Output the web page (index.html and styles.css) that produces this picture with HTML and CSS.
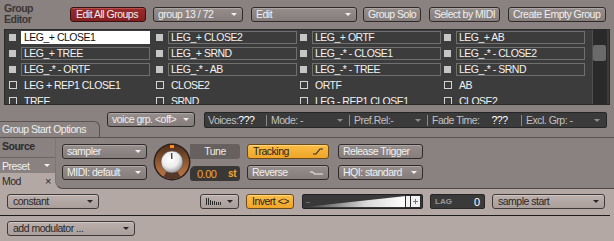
FILE: index.html
```html
<!DOCTYPE html>
<html lang="en">
<head>
    <meta charset="UTF-8">
    <meta name="viewport" content="width=device-width, initial-scale=1.0">
    <title>Group Editor</title>
    <link rel="stylesheet" href="styles.css">
</head>
<body>
    <div class="editor">
        <div class="top-bar">
            <div class="title"><div>Group</div><div>Editor</div></div>
            <button class="btn btn-red btn-edit-all">Edit All Groups</button>
            <button class="btn drop-group"><span>group 13 / 72</span><i class="arrow"></i></button>
            <button class="btn drop-edit"><span>Edit</span><i class="arrow"></i></button>
            <button class="btn btn-solo">Group Solo</button>
            <button class="btn btn-midi">Select by MIDI</button>
            <button class="btn btn-create">Create Empty Group</button>
        </div>

        <div class="group-list">
            <div class="grid">
                <div class="cell"><span class="check"></span><span class="name sel">LEG_+ CLOSE1</span></div>
                <div class="cell"><span class="check"></span><span class="name">LEG_+ CLOSE2</span></div>
                <div class="cell"><span class="check"></span><span class="name">LEG_+ ORTF</span></div>
                <div class="cell"><span class="check"></span><span class="name">LEG_+ AB</span></div>

                <div class="cell"><span class="check"></span><span class="name">LEG_+ TREE</span></div>
                <div class="cell"><span class="check"></span><span class="name">LEG_+ SRND</span></div>
                <div class="cell"><span class="check"></span><span class="name">LEG_-* - CLOSE1</span></div>
                <div class="cell"><span class="check"></span><span class="name">LEG_-* - CLOSE2</span></div>

                <div class="cell"><span class="check"></span><span class="name">LEG_-* - ORTF</span></div>
                <div class="cell"><span class="check"></span><span class="name">LEG_-* - AB</span></div>
                <div class="cell"><span class="check"></span><span class="name">LEG_-* - TREE</span></div>
                <div class="cell"><span class="check"></span><span class="name">LEG_-* - SRND</span></div>

                <div class="cell"><span class="check off"></span><span class="name plain">LEG + REP1 CLOSE1</span></div>
                <div class="cell"><span class="check off"></span><span class="name plain">CLOSE2</span></div>
                <div class="cell"><span class="check off"></span><span class="name plain">ORTF</span></div>
                <div class="cell"><span class="check off"></span><span class="name plain">AB</span></div>

                <div class="cell"><span class="check off"></span><span class="name plain">TREE</span></div>
                <div class="cell"><span class="check off"></span><span class="name plain">SRND</span></div>
                <div class="cell"><span class="check off"></span><span class="name plain">LEG - REP1 CLOSE1</span></div>
                <div class="cell"><span class="check off"></span><span class="name plain">CLOSE2</span></div>
            </div>
            <div class="scrollbar"><div class="thumb"></div></div>
        </div>

        <div class="options-row">
            <div class="tab-start">Group Start Options</div>
            <button class="btn drop-voice"><span>voice grp. &lt;off&gt;</span><i class="arrow"></i></button>
            <div class="info-bar">
                <div class="seg seg-voices">Voices: <b>???</b></div>
                <span class="sep"></span>
                <div class="seg seg-mode">Mode: -<i class="arrow"></i></div>
                <span class="sep"></span>
                <div class="seg seg-pref">Pref.Rel:-<i class="arrow"></i></div>
                <span class="sep"></span>
                <div class="seg seg-fade">Fade Time:<b class="fade-val">???</b></div>
                <span class="sep"></span>
                <div class="seg seg-excl">Excl. Grp: -<i class="arrow"></i></div>
            </div>
        </div>

        <div class="source">
            <div class="source-side">
                <div class="source-label">Source</div>
                <div class="preset-tab"><span>Preset</span><i class="arrow"></i></div>
                <div class="mod-tab"><span>Mod</span><span class="close">&times;</span></div>
            </div>
            <div class="source-panel">
                <div class="col col-drops">
                    <button class="btn"><span>sampler</span><i class="arrow"></i></button>
                    <button class="btn"><span>MIDI: default</span><i class="arrow"></i></button>
                </div>
                <div class="knob">
                    <svg width="38" height="38" viewBox="0 0 38 38">
                        <defs>
                            <radialGradient id="cap" cx="42%" cy="35%" r="70%">
                                <stop offset="0" stop-color="#ffffff"/>
                                <stop offset="0.55" stop-color="#ececec"/>
                                <stop offset="1" stop-color="#8e8e8e"/>
                            </radialGradient>
                            <linearGradient id="ring" x1="0" y1="0" x2="0" y2="1">
                                <stop offset="0" stop-color="#4e2e1c"/>
                                <stop offset="0.7" stop-color="#a8683a"/>
                                <stop offset="1" stop-color="#b47444"/>
                            </linearGradient>
                        </defs>
                        <circle cx="19" cy="19" r="18.5" fill="#2b211c"/>
                        <circle cx="19" cy="19" r="17" fill="url(#ring)"/>
                        <path d="M 10.5 33.7 A 17 17 0 0 0 27.5 33.7 L 19 19 Z" fill="#55382a"/>
                        <rect x="17" y="2" width="4" height="3" fill="#ff8b1f"/>
                        <circle cx="19" cy="19" r="11" fill="url(#cap)" stroke="#4a4644" stroke-width="0.6"/>
                        <line x1="18.6" y1="10" x2="18.8" y2="16" stroke="#4a4a4a" stroke-width="1.5"/>
                    </svg>
                </div>
                <div class="col col-tune">
                    <div class="tune-label">Tune</div>
                    <div class="tune-value"><span>0.00</span><b>st</b></div>
                </div>
                <div class="col col-track">
                    <button class="btn btn-orange">
                        <span>Tracking</span>
                        <svg width="10" height="7" viewBox="0 0 10 7"><polyline points="0,6 3,6 7,1 10,1" fill="none" stroke="#2a2a2a" stroke-width="1.2"/></svg>
                    </button>
                    <button class="btn">
                        <span>Reverse</span>
                        <svg width="13" height="4" viewBox="0 0 13 4"><polyline points="0,1 3,1 4,3 13,3" fill="none" stroke="#f0f0f0" stroke-width="1"/></svg>
                    </button>
                </div>
                <div class="col col-release">
                    <button class="btn">Release Trigger</button>
                    <button class="btn"><span>HQI: standard</span><i class="arrow"></i></button>
                </div>
            </div>
        </div>

        <div class="mod-area">
            <div class="mod-row">
                <button class="btn btn-light drop-constant"><span>constant</span><i class="arrow"></i></button>
                <button class="btn btn-light drop-bars">
                    <svg width="15" height="7" viewBox="0 0 15 7">
                        <rect x="0" y="0" width="1" height="7" fill="#2a2a2a"/>
                        <rect x="2" y="0" width="1" height="7" fill="#2a2a2a"/>
                        <rect x="4" y="2" width="1" height="5" fill="#2a2a2a"/>
                        <rect x="6" y="3" width="1" height="4" fill="#2a2a2a"/>
                        <rect x="8" y="3" width="1" height="4" fill="#2a2a2a"/>
                        <rect x="10" y="4" width="1" height="3" fill="#2a2a2a"/>
                        <rect x="12" y="4" width="1" height="3" fill="#2a2a2a"/>
                        <rect x="14" y="4" width="1" height="3" fill="#2a2a2a"/>
                    </svg>
                    <i class="arrow"></i>
                </button>
                <button class="btn btn-orange btn-invert">Invert &lt;&gt;</button>
                <div class="slider">
                    <svg width="119" height="13" viewBox="0 0 119 13">
                        <defs>
                            <linearGradient id="ramp" x1="0" x2="1" y1="0" y2="0">
                                <stop offset="0" stop-color="#3a3a3a"/>
                                <stop offset="0.6" stop-color="#d8d8d8"/>
                                <stop offset="1" stop-color="#ffffff"/>
                            </linearGradient>
                        </defs>
                        <polygon points="2,12 103,1 103,12" fill="url(#ramp)"/>
                        <rect x="3" y="7" width="4" height="1" fill="#6e6e6e"/>
                        <rect x="102.5" y="0.5" width="15" height="12" fill="#f2f2f2" stroke="#2c2c2c"/>
                        <line x1="107.5" y1="1" x2="107.5" y2="12" stroke="#2c2c2c"/>
                        <line x1="110" y1="6.5" x2="115" y2="6.5" stroke="#777"/>
                        <line x1="112.5" y1="4" x2="112.5" y2="9" stroke="#777"/>
                    </svg>
                </div>
                <div class="lag"><span class="lag-label">LAG</span><span class="lag-value">0</span></div>
                <button class="btn btn-light drop-sample"><span>sample start</span><i class="arrow"></i></button>
            </div>
            <div class="bottom-row">
                <button class="btn btn-light drop-add"><span>add modulator ...</span><i class="arrow"></i></button>
            </div>
        </div>
    </div>
</body>
</html>
```

FILE: styles.css
```css
* {
    margin: 0;
    padding: 0;
    box-sizing: border-box;
}

body {
    font-family: "Liberation Sans", Arial, sans-serif;
    font-size: 10.5px;
    letter-spacing: -0.5px;
    color: #f0f0f0;
    background-color: #8a8280;
    width: 614px;
    height: 241px;
    overflow: hidden;
}

button {
    font: inherit;
    letter-spacing: inherit;
}

.editor {
    display: flex;
    flex-direction: column;
    height: 241px;
}

/* buttons and dropdowns */

.btn {
    height: 15px;
    padding: 0 5px 0 4px;
    border: 1px solid #2f2b2a;
    border-radius: 3px;
    background: linear-gradient(#968e8c, #857d7b);
    box-shadow: inset 0 1px 0 rgba(255, 255, 255, 0.22);
    color: #f0f0f0;
    line-height: 13px;
    text-align: left;
    white-space: nowrap;
    display: flex;
    align-items: center;
    justify-content: space-between;
    cursor: pointer;
    flex: none;
}

.arrow {
    width: 0;
    height: 0;
    border-left: 3px solid transparent;
    border-right: 3px solid transparent;
    border-top: 3px solid #f0f0f0;
    flex: none;
}

.btn-red {
    background: linear-gradient(#9a2c2c, #842022);
    border-color: #3c1010;
    box-shadow: inset 0 1px 0 rgba(255, 160, 160, 0.3);
}

.btn-orange {
    background: linear-gradient(#fbbd45, #eea52a);
    border-color: #6b4a16;
    box-shadow: inset 0 1px 0 rgba(255, 240, 190, 0.5);
    color: #262320;
    padding-left: 5px;
}

.btn-light {
    background: linear-gradient(#bcb0ad, #aa9e9b);
    border-color: #3f3937;
    box-shadow: inset 0 1px 0 rgba(255, 255, 255, 0.3);
    color: #2a2726;
    padding-left: 5px;
}

.btn-light .arrow {
    border-top-color: #2a2726;
}

/* top bar */

.top-bar {
    display: flex;
    align-items: flex-start;
    height: 29px;
    padding: 7px 0 0 4px;
}

.title {
    width: 66px;
    margin-top: -4px;
    font-weight: bold;
    line-height: 10px;
    color: #3b3735;
    flex: none;
}

.title div + div {
    margin-top: 1px;
}

.btn-edit-all {
    width: 76px;
    padding-left: 5px;
}

.drop-group {
    width: 90px;
    margin-left: 7px;
}

.drop-edit {
    width: 106px;
    margin-left: 8px;
}

.btn-solo {
    width: 58px;
    margin-left: 6px;
}

.btn-midi {
    width: 71px;
    margin-left: 8px;
}

.btn-create {
    width: 98px;
    margin-left: 8px;
}

/* group list */

.group-list {
    display: flex;
    height: 76px;
    margin: 0 4px;
    background-color: #3c3c3c;
    border: 1px solid #2a2a2a;
    overflow: hidden;
}

.grid {
    display: grid;
    grid-template-columns: 147px 144px 144px 144px;
    grid-auto-rows: 16px;
    padding: 1px 0 0 4px;
    flex: none;
}

.cell {
    display: flex;
    align-items: flex-start;
}

.check {
    width: 7px;
    height: 7px;
    margin-top: 3px;
    background-color: #c6c6c6;
    flex: none;
}

.check.off {
    width: 8px;
    height: 8px;
    margin-top: 2px;
    background: none;
    border: 1px solid #d4d4d4;
}

.name {
    width: 129px;
    height: 13px;
    margin-left: 5px;
    padding-left: 2px;
    border: 1px solid #6f6f6f;
    line-height: 11px;
    color: #f2f2f2;
    white-space: nowrap;
    overflow: hidden;
}

.check.off + .name {
    margin-left: 4px;
}

.name.sel {
    background-color: #ffffff;
    border-color: #ffffff;
    color: #111111;
}

.name.plain {
    border-color: transparent;
}

.scrollbar {
    width: 15px;
    margin-left: 4px;
    background-color: #2a2a2a;
    border-left: 1px solid #505050;
    flex: none;
}

.thumb {
    width: 13px;
    height: 16px;
    margin-top: 15px;
    background-color: #6a6a6a;
    border-radius: 2px;
}

/* group start options */

.options-row {
    display: flex;
    align-items: flex-start;
    height: 33px;
    border-bottom: 1px solid #5a5351;
}

.tab-start {
    align-self: flex-end;
    width: 100px;
    height: 16px;
    padding-left: 2px;
    border-top: 1px solid #5a5351;
    border-right: 1px solid #5a5351;
    border-top-right-radius: 6px;
    line-height: 15px;
    color: #eeeeee;
    flex: none;
}

.drop-voice {
    width: 88px;
    margin: 7px 0 0 7px;
}

.info-bar {
    display: flex;
    align-items: center;
    width: 403px;
    height: 16px;
    margin: 7px 0 0 9px;
    background-color: #3b3b3b;
    border: 1px solid #262626;
    border-radius: 2px;
    color: #c2c2c2;
    white-space: nowrap;
}

.info-bar b {
    font-weight: normal;
    color: #ffffff;
}

.info-bar .arrow {
    margin-left: auto;
    margin-right: 6px;
    border-top-color: #8e8e8e;
}

.sep {
    width: 1px;
    height: 11px;
    background-color: #8a8a8a;
    flex: none;
}

.seg {
    display: flex;
    align-items: center;
    padding-left: 4px;
    flex: none;
}

.seg-voices {
    width: 61px;
    padding-left: 3px;
}

.seg-mode {
    width: 82px;
}

.seg-pref {
    width: 77px;
}

.seg-fade {
    width: 93px;
}

.fade-val {
    margin-left: 12px;
}

.seg-excl {
    flex: 1;
}

/* source */

.source {
    display: flex;
    height: 51px;
    background: linear-gradient(#8a8280 35px, #b4a8a5 35px);
}

.source-side {
    width: 55px;
    display: flex;
    flex-direction: column;
    flex: none;
}

.source-label {
    height: 19px;
    padding: 2px 0 0 2px;
    font-weight: bold;
    line-height: 12px;
    color: #2f2b2a;
}

.preset-tab {
    height: 16px;
    padding: 0 5px 0 2px;
    border-top: 1px solid #6f6765;
    display: flex;
    align-items: center;
    justify-content: space-between;
    background-color: #8a8280;
}

.mod-tab {
    height: 16px;
    padding: 0 4px 0 2px;
    display: flex;
    align-items: center;
    justify-content: space-between;
    color: #2c2928;
}

.close {
    font-size: 11px;
}

.source-panel {
    flex: 1;
    display: flex;
    align-items: flex-start;
    padding: 6px 0 0 6px;
    background-color: #8a8280;
    border-left: 1px solid #7e7674;
    border-bottom: 1px solid #4c4644;
    border-bottom-left-radius: 8px;
}

.col {
    display: flex;
    flex-direction: column;
    gap: 6px;
    flex: none;
}

.col .btn {
    width: 100%;
}

.col-drops {
    width: 85px;
}

.knob {
    width: 37px;
    height: 38px;
    margin: -1px 0 0 6px;
    flex: none;
}

.col-tune {
    width: 50px;
}

.tune-label {
    height: 15px;
    background-color: #66605e;
    border-radius: 0 3px 3px 0;
    line-height: 15px;
    text-align: center;
    color: #ececec;
}

.tune-value {
    height: 15px;
    margin-top: 1px;
    padding: 0 4px 0 7px;
    background-color: #3a3837;
    border-radius: 5px 3px 3px 3px;
    display: flex;
    align-items: center;
    justify-content: space-between;
    color: #f2a62e;
    font-size: 11px;
}

.tune-value b {
    font-size: 10px;
}

.col-track {
    width: 82px;
    margin-left: 7px;
}

.col-release {
    width: 85px;
    margin-left: 9px;
}

/* modulation */

.mod-area {
    flex: 1;
    background-color: #b4a8a5;
}

.mod-row {
    display: flex;
    align-items: flex-start;
    width: 610px;
    height: 27px;
    padding: 5px 0 0 7px;
    border-bottom: 1px solid #1e1c1c;
}

.drop-constant {
    width: 92px;
}

.drop-bars {
    width: 39px;
    margin-left: 101px;
}

.btn-invert {
    width: 48px;
    margin-left: 7px;
}

.slider {
    width: 121px;
    height: 15px;
    margin-left: 8px;
    background-color: #393939;
    border: 1px solid #222222;
    border-radius: 2px;
    flex: none;
}

.slider svg {
    display: block;
}

.lag {
    width: 55px;
    height: 15px;
    margin-left: 7px;
    padding-left: 4px;
    background-color: #3a3a3a;
    border: 1px solid #262626;
    border-radius: 2px;
    display: flex;
    align-items: center;
    flex: none;
}

.lag-label {
    font-size: 8px;
    font-weight: bold;
    letter-spacing: 0;
    color: #9a9a9a;
}

.lag-value {
    margin-left: 22px;
    font-size: 11px;
    color: #ffffff;
}

.drop-sample {
    width: 113px;
    margin-left: 7px;
}

.bottom-row {
    padding: 5px 0 0 7px;
}

.drop-add {
    width: 128px;
}
```
